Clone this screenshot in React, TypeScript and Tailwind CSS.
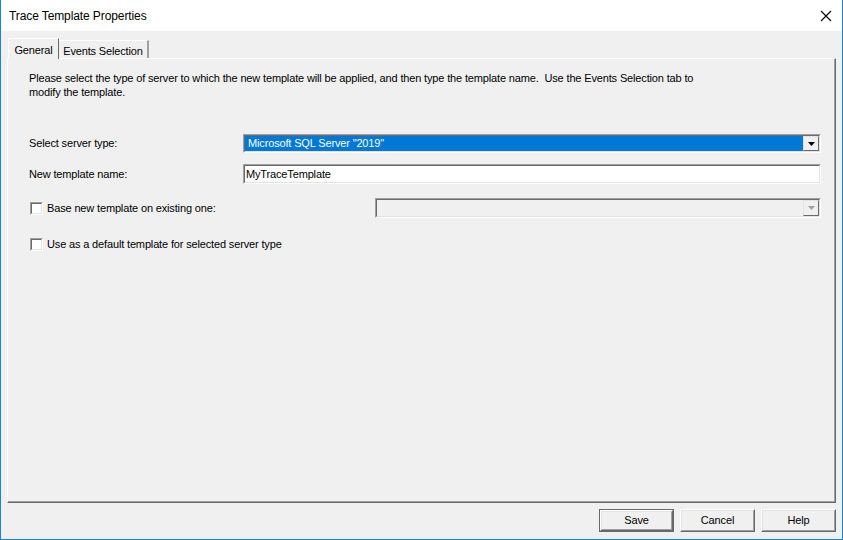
import React from "react";

const font = { fontFamily: '"Liberation Sans", Arial, sans-serif' };

function Sunken({ className = "", children }: { className?: string; children?: React.ReactNode }) {
  return (
    <div className={"border border-t-[#a0a0a0] border-l-[#a0a0a0] border-b-white border-r-white " + className}>
      <div className="h-full w-full border border-t-[#696969] border-l-[#696969] border-b-[#e3e3e3] border-r-[#e3e3e3]">
        {children}
      </div>
    </div>
  );
}

function Arrow({ disabled }: { disabled?: boolean }) {
  return (
    <div className="w-[16px] h-full bg-[#f0f0f0] border border-t-[#e3e3e3] border-l-[#e3e3e3] border-b-[#696969] border-r-[#696969] flex items-center justify-center">
      <svg width="7" height="4" viewBox="0 0 7 4">
        <path d="M0 0h7L3.5 4z" fill={disabled ? "#a0a0a0" : "#000"} />
      </svg>
    </div>
  );
}

function CheckBox() {
  return (
    <div className="w-[13px] h-[13px] border border-t-[#a0a0a0] border-l-[#a0a0a0] border-b-white border-r-white">
      <div className="w-full h-full bg-white border border-t-[#696969] border-l-[#696969] border-b-[#e3e3e3] border-r-[#e3e3e3]" />
    </div>
  );
}

function Btn({ label, def }: { label: string; def?: boolean }) {
  return (
    <div className={"w-[75px] h-[23px] " + (def ? "border border-[#696969]" : "")}>
      <div className="w-full h-full border border-t-white border-l-white border-b-[#696969] border-r-[#696969]">
        <div className="w-full h-full border border-t-[#e3e3e3] border-l-[#e3e3e3] border-b-[#a0a0a0] border-r-[#a0a0a0] bg-[#f0f0f0] flex items-center justify-center text-[11px] text-black">
          {label}
        </div>
      </div>
    </div>
  );
}

export default function App() {
  return (
    <div style={font} className="w-[843px] h-[540px] bg-[#f0f0f0] border-l border-r border-b border-[#1883d7] flex flex-col text-black overflow-hidden tracking-[-0.15px]">
      <div className="h-[31px] bg-white flex items-center justify-between pl-[8px] pr-[10px] shrink-0">
        <span className="text-[12px] text-black tracking-[-0.1px]">Trace Template Properties</span>
        <svg width="12" height="12" viewBox="0 0 12 12">
          <path d="M1 1L11 11M11 1L1 11" stroke="#000" strokeWidth="1.1" />
        </svg>
      </div>

      <div className="flex flex-col px-[6px] pt-[7px]">
        <div className="flex items-end h-[21px] pl-[1px]">
          <div className="relative z-10 h-[21px] w-[51px] bg-[#f0f0f0] border-t border-l border-white border-r border-r-[#696969] flex items-start justify-center pt-[3px] text-[11px]">
            General
          </div>
          <div className="h-[19px] w-[90px] bg-[#f0f0f0] border-t border-white border-r-2 border-r-[#a0a0a0] flex items-start justify-center pt-[2px] text-[11px]">
            Events Selection
          </div>
        </div>
        <div className="-mt-[1px] h-[445px] border border-t-white border-l-white border-b-[#696969] border-r-[#696969]">
          <div className="w-full h-full border-r border-b border-r-[#a0a0a0] border-b-[#a0a0a0] pl-[21px] pr-[13px] pt-[12px] text-[11px]">
            <p className="leading-[14px] w-[700px]">
              Please select the type of server to which the new template will be applied, and then type the template name.&nbsp; Use the Events Selection tab to
              <br />
              modify the template.
            </p>

            <div className="flex items-center mt-[35px] h-[19px]">
              <div className="w-[214px]">Select server type:</div>
              <Sunken className="flex-1 h-[19px]">
                <div className="flex h-full">
                  <div className="flex-1 bg-[#0078d7] text-white pl-[2px] flex items-center border border-dotted border-[#0078d7]">
                    Microsoft SQL Server "2019"
                  </div>
                  <Arrow />
                </div>
              </Sunken>
            </div>

            <div className="flex items-center mt-[11px] h-[20px]">
              <div className="w-[214px]">New template name:</div>
              <Sunken className="flex-1 h-[20px]">
                <div className="bg-white h-full pl-[1px] flex items-center">MyTraceTemplate</div>
              </Sunken>
            </div>

            <div className="flex items-center mt-[14px] h-[20px]">
              <div className="w-[346px] flex items-center">
                <div className="ml-[1px] mr-[4px]"><CheckBox /></div>
                <span>Base new template on existing one:</span>
              </div>
              <Sunken className="flex-1 h-[20px]">
                <div className="flex h-full bg-[#f0f0f0]">
                  <div className="flex-1" />
                  <Arrow disabled />
                </div>
              </Sunken>
            </div>

            <div className="flex items-center mt-[18px] h-[16px]">
              <div className="ml-[1px] mr-[4px]"><CheckBox /></div>
              <span>Use as a default template for selected server type</span>
            </div>
          </div>
        </div>
      </div>

      <div className="flex justify-end gap-[6px] pr-[6px] mt-[6px]">
        <Btn label="Save" def />
        <Btn label="Cancel" />
        <Btn label="Help" />
      </div>
    </div>
  );
}
